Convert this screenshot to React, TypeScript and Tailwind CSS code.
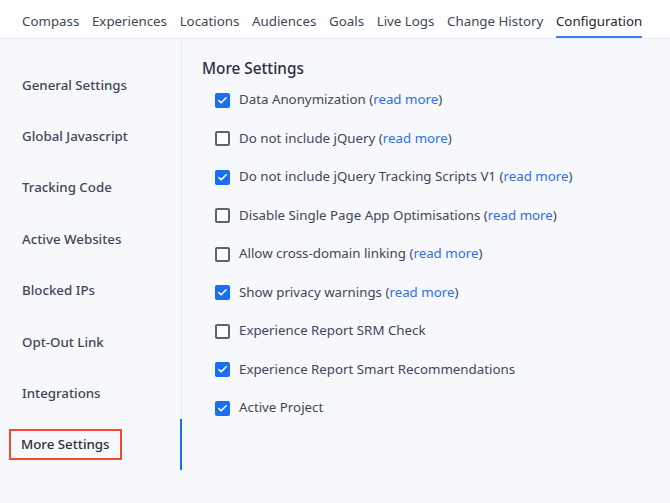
import { Check } from 'lucide-react';

const tabs = ['Compass', 'Experiences', 'Locations', 'Audiences', 'Goals', 'Live Logs', 'Change History', 'Configuration'];

const sideItems = [
    'General Settings',
    'Global Javascript',
    'Tracking Code',
    'Active Websites',
    'Blocked IPs',
    'Opt-Out Link',
    'Integrations',
    'More Settings',
];

interface Setting {
    label: string;
    checked: boolean;
    readMore?: boolean;
}

const settings: Setting[] = [
    { label: 'Data Anonymization', checked: true, readMore: true },
    { label: 'Do not include jQuery', checked: false, readMore: true },
    { label: 'Do not include jQuery Tracking Scripts V1', checked: true, readMore: true },
    { label: 'Disable Single Page App Optimisations', checked: false, readMore: true },
    { label: 'Allow cross-domain linking', checked: false, readMore: true },
    { label: 'Show privacy warnings', checked: true, readMore: true },
    { label: 'Experience Report SRM Check', checked: false },
    { label: 'Experience Report Smart Recommendations', checked: true },
    { label: 'Active Project', checked: true },
];

export default function App() {
    return (
        <div className="w-[670px] h-[503px] bg-[#f6f8fc] text-[#3f4756] font-['Noto_Sans',sans-serif] overflow-hidden">
            {/* Top tabs */}
            <div className="bg-white h-[39px] border-b border-[#e6eaf2] flex items-end gap-[12.7px] pl-[22px] whitespace-nowrap">
                {tabs.map((tab) => (
                    <div
                        key={tab}
                        className={`h-full flex items-center text-[13.3px] ${tab === 'Configuration' ? 'text-[#1f2633] border-b-2 border-[#3b82f6]' : 'text-[#3f4756]'}`}
                    >
                        <span className={tab === 'Configuration' ? 'pt-[8px]' : 'pt-[8px] pb-[2px]'}>{tab}</span>
                    </div>
                ))}
            </div>

            <div className="flex">
                {/* Sidebar */}
                <div className="w-[182px] border-r border-[#e2e8f3] pt-[20px] h-[432px] flex flex-col">
                    {sideItems.map((item) => {
                        const active = item === 'More Settings';
                        return (
                            <div key={item} className="relative h-[51.4px] flex items-center">
                                <span
                                    className={`text-[13.3px] font-medium leading-[20px] ${active ? 'ml-[9px] px-[10px] py-[3.5px] border-2 border-[#f24a2b] text-[#2a313d]' : 'ml-[22px] text-[#3f4756]'}`}
                                >
                                    {item}
                                </span>
                                {active && <div className="absolute right-[-1px] top-0 bottom-0 w-[2px] bg-[#1a6ef5]" />}
                            </div>
                        );
                    })}
                </div>

                {/* Content */}
                <div className="pl-[20px] pt-[17px]">
                    <h2 className="text-[15.3px] font-medium text-[#2a313d] leading-[24px] mb-[1px]">More Settings</h2>
                    <div className="flex flex-col">
                        {settings.map((s) => (
                            <label key={s.label} className="flex items-center h-[38.5px] pl-[13px] text-[13.3px]">
                                <span
                                    className={`w-[15px] h-[15px] rounded-[2px] flex items-center justify-center mr-[9px] ${s.checked ? 'bg-[#1a6ef5]' : 'border-2 border-[#5b6472] bg-white'}`}
                                >
                                    {s.checked && <Check className="w-[11px] h-[11px] text-white" strokeWidth={3.5} />}
                                </span>
                                <span>
                                    {s.label}
                                    {s.readMore && (
                                        <>
                                            {' '}(<span className="text-[#2f6fe8]">read more</span>)
                                        </>
                                    )}
                                </span>
                            </label>
                        ))}
                    </div>
                </div>
            </div>
        </div>
    );
}
